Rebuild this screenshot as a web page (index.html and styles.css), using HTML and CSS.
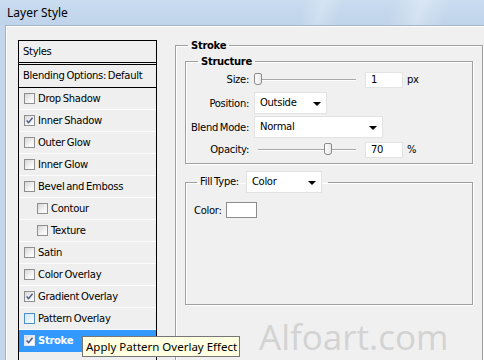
FILE: index.html
```html
<!DOCTYPE html>
<html>
<head>
<meta charset="utf-8">
<link rel="stylesheet" href="styles.css">
</head>
<body>
<div class="window">
  <div class="titlebar">Layer Style</div>
  <div class="frame">
    <div class="client">
      <div class="styles-list">
        <div class="list-head">Styles</div>
        <div class="list-blend">Blending Options: Default</div>
        <div class="item"><span class="cb"></span>Drop Shadow</div>
        <div class="item"><span class="cb checked"><svg viewBox="0 0 10 10"><path d="M1.8 5 L4 7.4 L8.4 2"/></svg></span>Inner Shadow</div>
        <div class="item"><span class="cb"></span>Outer Glow</div>
        <div class="item"><span class="cb"></span>Inner Glow</div>
        <div class="item"><span class="cb"></span>Bevel and Emboss</div>
        <div class="item sub"><span class="cb"></span>Contour</div>
        <div class="item sub"><span class="cb"></span>Texture</div>
        <div class="item"><span class="cb"></span>Satin</div>
        <div class="item"><span class="cb"></span>Color Overlay</div>
        <div class="item"><span class="cb checked"><svg viewBox="0 0 10 10"><path d="M1.8 5 L4 7.4 L8.4 2"/></svg></span>Gradient Overlay</div>
        <div class="item"><span class="cb hover"></span>Pattern Overlay</div>
        <div class="item selected"><span class="cb checked"><svg viewBox="0 0 10 10"><path d="M1.8 5 L4 7.4 L8.4 2"/></svg></span>Stroke</div>
        <div class="item"></div>
      </div>

      <fieldset class="stroke">
        <legend class="legend-bold">Stroke</legend>
        <fieldset class="structure">
          <legend class="legend-bold">Structure</legend>
          <div class="row row-size">
            <span class="lbl">Size:</span>
            <div class="slider"><div class="track"></div><div class="thumb" style="left:0px"></div></div>
            <div class="num">1</div>
            <span class="unit">px</span>
          </div>
          <div class="row row-pos">
            <span class="lbl">Position:</span>
            <div class="select w-pos">Outside<span class="arrow"></span></div>
          </div>
          <div class="row row-blend">
            <span class="lbl">Blend Mode:</span>
            <div class="select w-blend">Normal<span class="arrow"></span></div>
          </div>
          <div class="row row-op">
            <span class="lbl">Opacity:</span>
            <div class="slider"><div class="track"></div><div class="thumb" style="left:70px"></div></div>
            <div class="num">70</div>
            <span class="unit">%</span>
          </div>
        </fieldset>
        <fieldset class="fill">
          <legend class="fill-legend"><span class="fill-lbl">Fill Type:</span><div class="select w-fill">Color<span class="arrow"></span></div></legend>
          <div class="color-row">
            <span>Color:</span>
            <span class="swatch"></span>
          </div>
        </fieldset>
      </fieldset>

      <div class="watermark">Alfoart.com</div>
      <div class="tooltip">Apply Pattern Overlay Effect</div>
    </div>
  </div>
</div>
</body>
</html>
```
FILE: styles.css
```css
html, body {
  margin: 0;
  padding: 0;
}
body {
  width: 484px;
  height: 360px;
  overflow: hidden;
  background: #f0f0f0;
  font-family: "DejaVu Sans", sans-serif;
  font-size: 10px;
  letter-spacing: -0.3px;
  word-spacing: -1px;
  color: #000;
}
.window {
  display: flex;
  flex-direction: column;
  width: 484px;
  height: 360px;
}
.titlebar {
  height: 25px;
  flex: none;
  box-sizing: border-box;
  padding: 4px 0 0 7px;
  font-family: "Noto Sans", sans-serif;
  font-size: 12px;
  letter-spacing: 0;
  word-spacing: 0;
  line-height: 17px;
  color: #000;
  background:
    linear-gradient(108deg,
      rgba(255,255,255,0) 0%, rgba(255,255,255,0) 62%,
      rgba(255,255,255,0.25) 66%, rgba(255,255,255,0) 70%,
      rgba(255,255,255,0) 80%, rgba(255,255,255,0.3) 86%,
      rgba(255,255,255,0) 92%),
    linear-gradient(180deg, #c9dcf0 0%, #bfd3ea 100%);
}
.frame {
  flex: 1;
  display: flex;
  padding-left: 5px;
  background: #c3d6ec;
  min-height: 0;
}
.client {
  position: relative;
  flex: 1;
  display: flex;
  align-items: flex-start;
  background: #f0f0f0;
  border-left: 1px solid #a5b5c8;
  border-top: 1px solid #a5b5c8;
  box-shadow: inset 1px 1px 0 #ffffff;
  padding: 14px 0 0 12px;
  gap: 18px;
  overflow: hidden;
}

/* styles list */
.styles-list {
  flex: none;
  width: 139px;
  height: 340px;
  box-sizing: border-box;
  border: 1px solid #000;
  border-bottom: none;
  background: #efefef;
}
.list-head {
  height: 21px;
  line-height: 21px;
  padding-left: 4px;
  border-bottom: 3px double #000;
}
.list-blend {
  height: 22px;
  line-height: 22px;
  padding-left: 4px;
  border-bottom: 1px solid #000;
}
.item {
  height: 21px;
  border-bottom: 1px solid #fbfbfb;
  display: flex;
  align-items: center;
  padding-left: 5px;
  gap: 3px;
}
.item.sub {
  padding-left: 18px;
}
.item.selected {
  background: #3399ff;
  color: #fff;
  font-weight: bold;
  border-bottom-color: #3399ff;
}
.cb {
  width: 11px;
  height: 11px;
  box-sizing: border-box;
  border: 1px solid #8f8f8f;
  background: linear-gradient(135deg, #d6d6d6 0%, #f4f4f4 60%, #ffffff 100%);
  display: flex;
  align-items: center;
  justify-content: center;
  flex: none;
}
.cb.hover {
  border-color: #4d8fc8;
  background: linear-gradient(135deg, #cfe4f5 0%, #eef6fc 70%, #ffffff 100%);
}
.cb svg {
  width: 9px;
  height: 9px;
}
.cb svg path {
  fill: none;
  stroke: #4a5b8e;
  stroke-width: 1.7;
}
.item.selected .cb {
  border-color: #dce6f2;
}

/* right side */
fieldset {
  margin: 0;
  min-width: 0;
}
.legend-bold {
  font-weight: bold;
  line-height: 13px;
  padding: 0 3px;
}
.stroke {
  flex: none;
  width: 308px;
  height: 340px;
  box-sizing: border-box;
  margin-top: -1px;
  padding: 3px 9px 0 9px;
  border: 1px solid #a0a0a0;
  box-shadow: inset 1px 1px 0 #fff, 1px 1px 0 #fff;
}
.stroke > legend {
  margin-left: 3px;
}
.structure {
  padding: 3px 0 5px 0;
  border: 1px solid #a0a0a0;
  box-shadow: inset 1px 1px 0 #fff, 1px 1px 0 #fff;
}
.structure > legend {
  margin-left: 12px;
}
.row {
  display: flex;
  align-items: center;
}
.row-size, .row-op {
  height: 17px;
}
.row-pos {
  height: 22px;
  margin-top: 4px;
}
.row-blend {
  height: 22px;
  margin-top: 2px;
}
.row-op {
  margin-top: 3px;
}
.lbl {
  width: 63px;
  text-align: right;
  flex: none;
}
.slider {
  position: relative;
  width: 104px;
  height: 17px;
  margin-left: 5px;
  flex: none;
}
.track {
  position: absolute;
  left: 4px;
  right: 2px;
  top: 8px;
  height: 1px;
  background: #a9a9a9;
  box-shadow: 0 1px 0 #fff;
}
.thumb {
  position: absolute;
  top: 2px;
  width: 8px;
  height: 12px;
  box-sizing: border-box;
  border: 1px solid #8a8a8a;
  border-radius: 2px 2px 3px 3px;
  background: linear-gradient(90deg, #fdfdfd 0%, #e9e9e9 100%);
}
.num {
  width: 38px;
  height: 16px;
  box-sizing: border-box;
  margin-left: 7px;
  background: #fff;
  border: 1px solid #e3e3e3;
  padding-left: 5px;
  line-height: 14px;
}
.unit {
  margin-left: 4px;
}
.select {
  position: relative;
  height: 22px;
  box-sizing: border-box;
  background: #fff;
  border: 1px solid #e2e2e2;
  padding-left: 5px;
  line-height: 20px;
  margin-left: 5px;
  flex: none;
}
.w-pos { width: 73px; }
.w-blend { width: 129px; }
.w-fill { width: 76px; margin-left: 7px; }
.arrow {
  position: absolute;
  right: 5px;
  top: 9px;
  width: 0;
  height: 0;
  border-left: 4px solid transparent;
  border-right: 4px solid transparent;
  border-top: 4px solid #000;
}
.fill {
  margin-top: 7px;
  height: 134px;
  box-sizing: border-box;
  padding: 9px 0 0 8px;
  border: 1px solid #a0a0a0;
  box-shadow: inset 1px 1px 0 #fff, 1px 1px 0 #fff;
}
.fill-legend {
  display: flex;
  align-items: center;
  margin-left: 3px;
  padding: 0 6px 0 3px;
}
.fill-lbl {
  line-height: 22px;
}
.color-row {
  display: flex;
  align-items: center;
  gap: 4px;
}
.swatch {
  width: 31px;
  height: 16px;
  box-sizing: border-box;
  background: #fff;
  border: 1px solid #8c8c8c;
}

/* overlays */
.watermark {
  position: absolute;
  left: 253px;
  top: 291px;
  font-family: "Open Sans", sans-serif;
  font-size: 35px;
  letter-spacing: 0;
  word-spacing: 0;
  line-height: 40px;
  color: #d3d3d3;
}
.tooltip {
  position: absolute;
  left: 76px;
  top: 310px;
  width: 158px;
  height: 21px;
  box-sizing: border-box;
  background: #ffffe1;
  border: 1px solid #767676;
  font-family: "Noto Sans", sans-serif;
  font-size: 11.5px;
  letter-spacing: 0;
  word-spacing: 0;
  line-height: 19px;
  padding-left: 3px;
  color: #000;
}
```
